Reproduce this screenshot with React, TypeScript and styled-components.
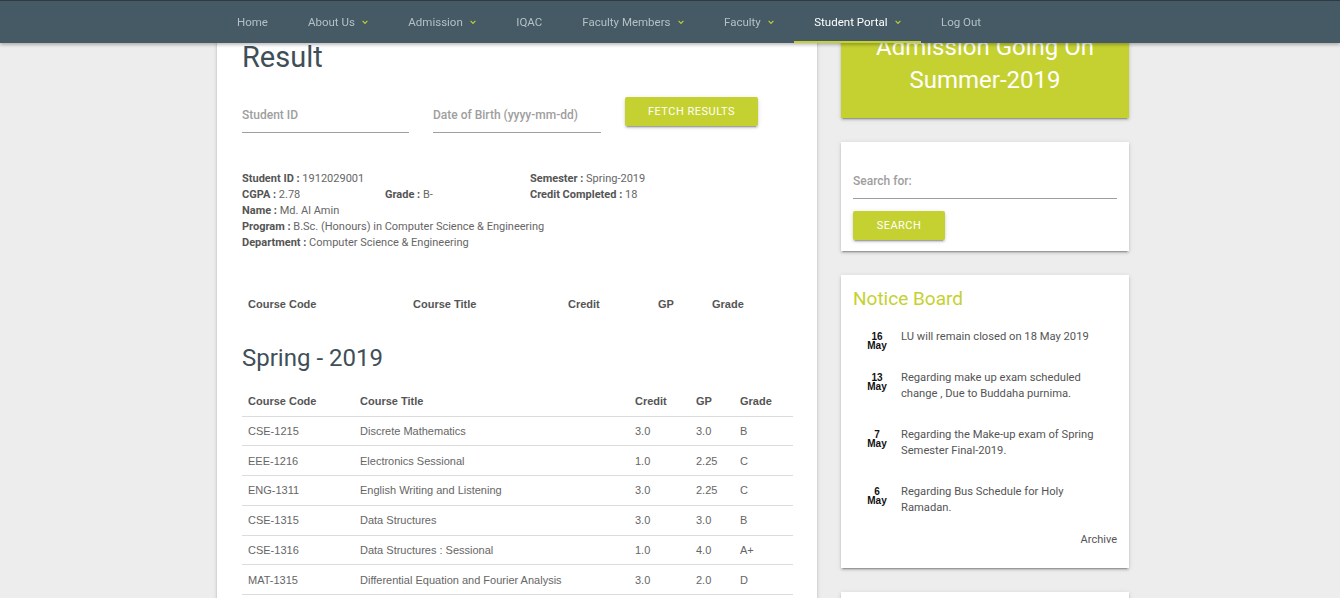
import React from "react";
import styled, { createGlobalStyle, css } from "styled-components";

const LIME = "#c5d131";

const GlobalStyle = createGlobalStyle`
  html, body {
    margin: 0;
    padding: 0;
    background: #ededed;
    overflow: hidden;
    font-family: Roboto, "Noto Sans", sans-serif;
  }
  * { box-sizing: border-box; }
`;

const shadow = css`
  box-shadow: 0 2px 2px 0 rgba(0, 0, 0, 0.14), 0 1px 5px 0 rgba(0, 0, 0, 0.12),
    0 3px 1px -2px rgba(0, 0, 0, 0.2);
`;

const NavBar = styled.nav`
  position: fixed;
  top: 0;
  left: 0;
  right: 0;
  height: 43px;
  background: #455a64;
  border-top: 1px solid #2e3b42;
  box-shadow: 0 2px 3px rgba(0, 0, 0, 0.25);
  z-index: 10;
`;

const NavList = styled.ul`
  list-style: none;
  margin: 0 0 0 217px;
  padding: 0;
  display: flex;
  height: 100%;
`;

const NavItem = styled.li<{ $active?: boolean }>`
  display: flex;
  align-items: center;
  gap: 7.5px;
  padding: 0 20px;
  height: 100%;
  font-size: 11.5px;
  color: ${(p) => (p.$active ? "#ffffff" : "#b4c0c6")};
  ${(p) => p.$active && `box-shadow: inset 0 -2px 0 ${LIME};`}
`;

const Chevron = () => (
  <svg width="6" height="5" viewBox="0 0 6 5" fill="none">
    <path d="M0.6 0.9 L3 3.4 L5.4 0.9" stroke={LIME} strokeWidth="1.1" />
  </svg>
);

const Page = styled.div`
  display: flex;
  align-items: flex-start;
  gap: 24px;
  margin-left: 217px;
  width: 912px;
`;

const MainCard = styled.main`
  width: 600px;
  background: #fff;
  ${shadow};
  padding: 41px 24px 40px 25px;
`;

const Title = styled.h1`
  margin: 0;
  font-size: 29px;
  font-weight: 400;
  line-height: 33px;
  color: #3f4f58;
`;

const FormRow = styled.div`
  display: flex;
  align-items: flex-start;
  gap: 24px;
  margin-top: 23px;
`;

const LineInput = styled.input<{ $w: number }>`
  width: ${(p) => p.$w}px;
  height: 36px;
  border: none;
  border-bottom: 1px solid #9e9e9e;
  outline: none;
  padding: 0;
  font-family: Roboto, sans-serif;
  font-size: 12px;
  font-weight: 500;
  background: transparent;
  &::placeholder {
    color: #9e9e9e;
  }
`;

const LimeButton = styled.button<{ $w: number }>`
  width: ${(p) => p.$w}px;
  height: 29px;
  border: none;
  border-radius: 2px;
  background: ${LIME};
  color: #fff;
  font-family: Roboto, sans-serif;
  font-size: 11px;
  letter-spacing: 0.5px;
  text-transform: uppercase;
  ${shadow};
  padding: 0;
`;

const Info = styled.div`
  display: grid;
  grid-template-columns: 143px 145px 1fr;
  margin-top: 38px;
  font-size: 11px;
  line-height: 16px;
  color: #666;
`;

const InfoCell = styled.div<{ $span?: number }>`
  grid-column: span ${(p) => p.$span || 1};
  white-space: nowrap;
`;

const Label = styled.b`
  color: #555;
  font-weight: 700;
`;

const Table = styled.table<{ $mt: number }>`
  width: 551px;
  border-collapse: collapse;
  table-layout: fixed;
  margin-top: ${(p) => p.$mt}px;
  font-family: "Liberation Sans", Arial, sans-serif;
  font-size: 11px;
`;

const Th = styled.th<{ $w: number }>`
  width: ${(p) => p.$w}px;
  text-align: left;
  padding: 0 6px;
  height: 30px;
  font-weight: 700;
  color: #555;
`;

const HeadRow = styled.tr<{ $line?: boolean }>`
  ${(p) => p.$line && "border-bottom: 1px solid #dcdcdc;"}
`;

const Tr = styled.tr`
  border-bottom: 1px solid #dcdcdc;
`;

const Td = styled.td`
  padding: 0 6px;
  height: 29.8px;
  color: #666;
  white-space: nowrap;
`;

const Semester = styled.h2`
  margin: 25px 0 0;
  font-size: 24px;
  font-weight: 400;
  line-height: 29px;
  color: #3f4f58;
`;

const Side = styled.aside`
  width: 288px;
  display: flex;
  flex-direction: column;
  gap: 24px;
`;

const Banner = styled.div`
  background: ${LIME};
  ${shadow};
  color: #fff;
  text-align: center;
  font-size: 24px;
  line-height: 33px;
  padding: 31px 10px 21px;
`;

const Card = styled.section<{ $pt?: number; $pb?: number }>`
  background: #fff;
  ${shadow};
  padding: ${(p) => p.$pt ?? 12}px 12px ${(p) => p.$pb ?? 12}px;
`;

const SearchField = styled(LineInput)`
  display: block;
  width: 100%;
`;

const SearchBtn = styled(LimeButton)`
  margin-top: 12px;
`;

const NoticeTitle = styled.h3`
  margin: 0;
  font-size: 19px;
  font-weight: 400;
  line-height: 22px;
  color: ${LIME};
`;

const NoticeList = styled.ul`
  list-style: none;
  margin: 19px 0 0;
  padding: 0;
  display: flex;
  flex-direction: column;
  gap: 25px;
`;

const Notice = styled.li`
  display: flex;
  align-items: flex-start;
  gap: 12px;
  padding-left: 12px;
`;

const DateBox = styled.div`
  width: 24px;
  height: 16px;
  flex: none;
  text-align: center;
  font-family: "Liberation Sans", Arial, sans-serif;
  font-weight: 700;
  font-size: 10px;
  line-height: 9px;
  color: #111;
  padding-top: 3px;
`;

const NoticeText = styled.div`
  font-size: 11.2px;
  line-height: 16px;
  color: #555;
  padding-right: 4px;
`;

const Archive = styled.div`
  text-align: right;
  margin-top: 16px;
  font-size: 11px;
  line-height: 16px;
  color: #555;
`;

const EmptyCard = styled.section`
  background: #fff;
  ${shadow};
  height: 120px;
`;

const navItems: { label: string; drop?: boolean; active?: boolean }[] = [
  { label: "Home" },
  { label: "About Us", drop: true },
  { label: "Admission", drop: true },
  { label: "IQAC" },
  { label: "Faculty Members", drop: true },
  { label: "Faculty", drop: true },
  { label: "Student Portal", drop: true, active: true },
  { label: "Log Out" },
];

const courses = [
  ["CSE-1215", "Discrete Mathematics", "3.0", "3.0", "B"],
  ["EEE-1216", "Electronics Sessional", "1.0", "2.25", "C"],
  ["ENG-1311", "English Writing and Listening", "3.0", "2.25", "C"],
  ["CSE-1315", "Data Structures", "3.0", "3.0", "B"],
  ["CSE-1316", "Data Structures : Sessional", "1.0", "4.0", "A+"],
  ["MAT-1315", "Differential Equation and Fourier Analysis", "3.0", "2.0", "D"],
  ["CSE-1317", "Object Oriented Programming", "3.0", "3.0", "B"],
];

const notices = [
  { d: "16", m: "May", t: "LU will remain closed on 18 May 2019" },
  { d: "13", m: "May", t: "Regarding make up exam scheduled change , Due to Buddaha purnima." },
  { d: "7", m: "May", t: "Regarding the Make-up exam of Spring Semester Final-2019." },
  { d: "6", m: "May", t: "Regarding Bus Schedule for Holy Ramadan." },
];

export default function App() {
  return (
    <>
      <GlobalStyle />
      <NavBar>
        <NavList>
          {navItems.map((n) => (
            <NavItem key={n.label} $active={n.active}>
              {n.label}
              {n.drop && <Chevron />}
            </NavItem>
          ))}
        </NavList>
      </NavBar>
      <Page>
        <MainCard>
          <Title>Result</Title>
          <FormRow>
            <LineInput $w={167} placeholder="Student ID" />
            <LineInput $w={168} placeholder="Date of Birth (yyyy-mm-dd)" />
            <LimeButton $w={133}>Fetch Results</LimeButton>
          </FormRow>
          <Info>
            <InfoCell $span={2}>
              <Label>Student ID :</Label> 1912029001
            </InfoCell>
            <InfoCell>
              <Label>Semester :</Label> Spring-2019
            </InfoCell>
            <InfoCell>
              <Label>CGPA :</Label> 2.78
            </InfoCell>
            <InfoCell>
              <Label>Grade :</Label> B-
            </InfoCell>
            <InfoCell>
              <Label>Credit Completed :</Label> 18
            </InfoCell>
            <InfoCell $span={3}>
              <Label>Name :</Label> Md. Al Amin
            </InfoCell>
            <InfoCell $span={3}>
              <Label>Program :</Label> B.Sc. (Honours) in Computer Science &amp; Engineering
            </InfoCell>
            <InfoCell $span={3}>
              <Label>Department :</Label> Computer Science &amp; Engineering
            </InfoCell>
          </Info>
          <Table $mt={38}>
            <thead>
              <HeadRow>
                <Th $w={165}>Course Code</Th>
                <Th $w={155}>Course Title</Th>
                <Th $w={90}>Credit</Th>
                <Th $w={54}>GP</Th>
                <Th $w={87}>Grade</Th>
              </HeadRow>
            </thead>
          </Table>
          <Semester>Spring - 2019</Semester>
          <Table $mt={13}>
            <thead>
              <HeadRow $line>
                <Th $w={112}>Course Code</Th>
                <Th $w={275}>Course Title</Th>
                <Th $w={61}>Credit</Th>
                <Th $w={44}>GP</Th>
                <Th $w={59}>Grade</Th>
              </HeadRow>
            </thead>
            <tbody>
              {courses.map((c) => (
                <Tr key={c[0]}>
                  {c.map((v, i) => (
                    <Td key={i}>{v}</Td>
                  ))}
                </Tr>
              ))}
            </tbody>
          </Table>
        </MainCard>
        <Side>
          <Banner>
            Admission Going On
            <br />
            Summer-2019
          </Banner>
          <Card $pt={21} $pb={11}>
            <SearchField $w={264} placeholder="Search for:" />
            <SearchBtn $w={92}>Search</SearchBtn>
          </Card>
          <Card $pt={13} $pb={20}>
            <NoticeTitle>Notice Board</NoticeTitle>
            <NoticeList>
              {notices.map((n) => (
                <Notice key={n.d}>
                  <DateBox>
                    {n.d}
                    <br />
                    {n.m}
                  </DateBox>
                  <NoticeText>{n.t}</NoticeText>
                </Notice>
              ))}
            </NoticeList>
            <Archive>Archive</Archive>
          </Card>
          <EmptyCard />
        </Side>
      </Page>
    </>
  );
}
